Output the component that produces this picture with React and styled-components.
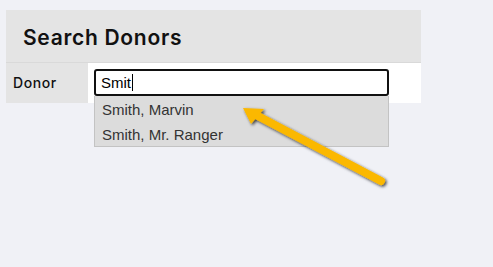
import React from "react";
import styled, { createGlobalStyle } from "styled-components";

const GlobalStyle = createGlobalStyle`
  html, body {
    margin: 0;
    padding: 0;
    background: #f0f1f6;
  }
  body {
    font-family: "Liberation Sans", Arial, sans-serif;
  }
`;

const Page = styled.div`
  position: relative;
  width: 493px;
  height: 267px;
  padding: 10px 0 0 6px;
  box-sizing: border-box;
`;

const Panel = styled.div`
  width: 415px;
`;

const Header = styled.div`
  height: 53px;
  background: #e4e4e4;
  border-bottom: 1px solid #d9d9d9;
  display: flex;
  align-items: center;
  padding: 3px 0 0 17px;
  box-sizing: border-box;
`;

const Title = styled.h2`
  margin: 0;
  font-family: Inter, "Open Sans", sans-serif;
  font-weight: 600;
  font-size: 21px;
  color: #111;
  letter-spacing: 0.7px;
`;

const Row = styled.div`
  display: flex;
  height: 40px;
`;

const Label = styled.div`
  width: 82px;
  background: #e4e4e4;
  display: flex;
  align-items: center;
  padding: 0 0 2px 7px;
  box-sizing: border-box;
  font-family: Inter, "Open Sans", sans-serif;
  font-weight: 500;
  font-size: 14px;
  letter-spacing: 0.6px;
  color: #111;
`;

const Cell = styled.div`
  flex: 1;
  background: #fff;
  padding: 6px 0 0 6px;
  box-sizing: border-box;
  position: relative;
`;

const Input = styled.div`
  width: 295px;
  height: 27px;
  border: 2px solid #111;
  border-radius: 3px;
  box-sizing: border-box;
  display: flex;
  align-items: center;
  padding-left: 5px;
  font-size: 15px;
  color: #000;
`;

const Caret = styled.span`
  display: inline-block;
  width: 1px;
  height: 17px;
  background: #000;
  margin-left: 1px;
`;

const Dropdown = styled.ul`
  position: absolute;
  left: 6px;
  top: 33px;
  width: 295px;
  margin: 0;
  padding: 0;
  list-style: none;
  background: #dcdcdc;
  border: 1px solid #c3c3c3;
  border-top: none;
  box-sizing: border-box;
`;

const Item = styled.li`
  height: 25px;
  display: flex;
  align-items: center;
  padding: 1px 0 0 7px;
  box-sizing: border-box;
  font-size: 15px;
  color: #333;
`;

const Arrow = styled.svg`
  position: absolute;
  left: 0;
  top: 0;
  pointer-events: none;
`;

export default function App() {
  return (
    <>
      <GlobalStyle />
      <Page>
        <Panel>
          <Header>
            <Title>Search Donors</Title>
          </Header>
          <Row>
            <Label>Donor</Label>
            <Cell>
              <Input>
                Smit<Caret />
              </Input>
              <Dropdown>
                <Item>Smith, Marvin</Item>
                <Item>Smith, Mr. Ranger</Item>
              </Dropdown>
            </Cell>
          </Row>
        </Panel>
        <Arrow width="493" height="267" viewBox="0 0 493 267">
          <defs>
            <filter id="sh" x="-20%" y="-20%" width="140%" height="140%">
              <feDropShadow dx="1.5" dy="1.5" stdDeviation="1.5" floodColor="#000" floodOpacity="0.75" />
            </filter>
          </defs>
          <g filter="url(#sh)">
            <line x1="381" y1="181" x2="256" y2="115" stroke="#fbb800" strokeWidth="8" strokeLinecap="round" />
            <polygon points="243,108 264,109 251,124" fill="#fbb800" />
          </g>
        </Arrow>
      </Page>
    </>
  );
}
